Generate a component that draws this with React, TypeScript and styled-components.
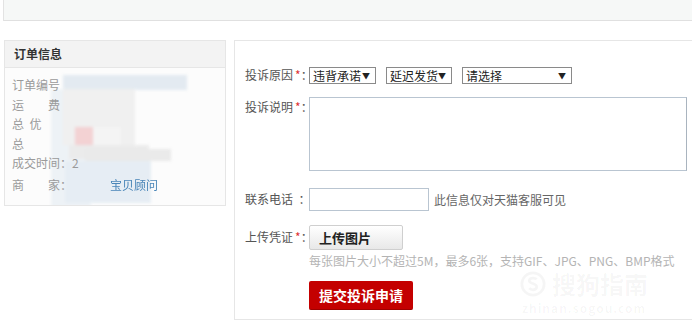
import styled, { createGlobalStyle } from "styled-components";

const GlobalStyle = createGlobalStyle`
    body {
        margin: 0;
        background: #fff;
        font-family: "Noto Sans CJK SC", "Noto Sans", sans-serif;
        font-size: 12px;
        color: #666;
        overflow: hidden;
    }
`

const Page = styled.div`
    width: 692px;
    height: 334px;
    overflow: hidden;
    position: relative;
`

const TopBar = styled.div`
    margin-left: 3px;
    height: 20px;
    background: #f6f8f7;
    border-left: 1px solid #e3e3e3;
    border-bottom: 1px solid #e0e0e0;
`

const Main = styled.div`
    display: flex;
    align-items: flex-start;
    gap: 8px;
    padding: 19px 0 0 4px;
`

const OrderPanel = styled.div`
    position: relative;
    width: 220px;
    height: 164px;
    border: 1px solid #e6e6e6;
    background: #fcfcfc;
    overflow: hidden;
`

const PanelTitle = styled.div`
    position: relative;
    z-index: 1;
    height: 26px;
    line-height: 26px;
    padding-left: 9px;
    background: #f3f3f3;
    border-bottom: 1px solid #e6e6e6;
    font-weight: bold;
    color: #333;
`

const InfoList = styled.div`
    position: relative;
    z-index: 1;
    padding: 7px 0 0 7px;
    color: #9a9a9a;
    line-height: 19.5px;
`

const InfoRow = styled.div<{ $gap?: number }>`
    margin-top: ${({ $gap }) => $gap ?? 0}px;
    white-space: pre;
`

const ShopLink = styled.span`
    margin-left: 38px;
    color: #4a86b8;
    filter: blur(0.4px);
`

const Mosaic = styled.div`
    position: absolute;
    inset: 0;
    z-index: 0;
    pointer-events: none;
    filter: blur(1.5px);
    opacity: 0.75;
`

const Tile = styled.div<{ $x: number; $y: number; $w: number; $h: number; $c: string }>`
    position: absolute;
    left: ${({ $x }) => $x}px;
    top: ${({ $y }) => $y}px;
    width: ${({ $w }) => $w}px;
    height: ${({ $h }) => $h}px;
    background: ${({ $c }) => $c};
`

const FormPanel = styled.div`
    flex: 1;
    margin-right: -4px;
    height: 280px;
    border: 1px solid #e6e6e6;
    padding: 26px 0 0 10px;
    box-sizing: border-box;
    position: relative;
`

const FormRow = styled.div<{ $top?: number }>`
    display: flex;
    align-items: flex-start;
    margin-top: ${({ $top }) => $top ?? 0}px;
`

const Label = styled.div<{ $pad?: number }>`
    width: 64px;
    flex-shrink: 0;
    padding-top: ${({ $pad }) => $pad ?? 0}px;
    line-height: 16px;
    color: #555;
    white-space: pre;
`

const Star = styled.span`
    color: #d33;
    margin-left: 2px;
`

const Controls = styled.div`
    display: flex;
    flex-direction: column;
    align-items: flex-start;
`

const SelectGroup = styled.div`
    display: flex;
    gap: 10px;
`

const FakeSelect = styled.div<{ $w: number }>`
    width: ${({ $w }) => $w}px;
    height: 17px;
    box-sizing: border-box;
    border: 1px solid #8a8a8a;
    background: #fff;
    color: #222;
    display: flex;
    align-items: center;
    justify-content: space-between;
    padding: 0 5px 0 3px;
    line-height: 15px;

    span.arrow {
        font-size: 8px;
        color: #222;
    }
`

const TextArea = styled.div`
    width: 378px;
    height: 74px;
    box-sizing: border-box;
    border: 1px solid #b9c5d1;
    border-right-color: #a9b4bf;
    background: #fff;
`

const PhoneLine = styled.div`
    display: flex;
    align-items: center;
    gap: 5px;
`

const PhoneInput = styled.div`
    width: 120px;
    height: 23px;
    box-sizing: border-box;
    border: 1px solid #b9c5d1;
    background: #fff;
`

const Hint = styled.span`
    color: #666;
`

const UploadButton = styled.div`
    width: 94px;
    height: 25px;
    box-sizing: border-box;
    border: 1px solid #cfcfcf;
    border-radius: 2px;
    background: linear-gradient(#ffffff, #e8e8e8);
    font-weight: bold;
    font-size: 13px;
    color: #222;
    line-height: 23px;
    padding-left: 9px;
`

const UploadTip = styled.div`
    margin-top: 2px;
    color: #b4b4b4;
    line-height: 18px;
`

const SubmitButton = styled.div`
    margin-top: 11px;
    width: 104px;
    height: 29px;
    box-sizing: border-box;
    border-radius: 2px;
    background: #c40000;
    border-bottom: 1px solid #9e0000;
    color: #fff;
    font-weight: bold;
    font-size: 14px;
    line-height: 28px;
    text-align: center;
`

const Watermark = styled.div`
    position: absolute;
    left: 285px;
    top: 229px;
    color: rgba(0, 0, 0, 0.04);
    display: flex;
    flex-direction: column;
    align-items: center;
    pointer-events: none;
`

const MarkTop = styled.div`
    display: flex;
    align-items: center;
    gap: 6px;
    font-size: 24px;
    line-height: 28px;
    font-weight: bold;
`

const MarkSub = styled.div`
    font-size: 12px;
    line-height: 14px;
    font-weight: bold;
    letter-spacing: 1px;
    margin-top: 3px;
`

const tiles = [
    { x: 58, y: 34, w: 124, h: 15, c: "#dbe5ee" },
    { x: 46, y: 48, w: 40, h: 120, c: "#e9eff4" },
    { x: 58, y: 48, w: 72, h: 56, c: "#ececec" },
    { x: 70, y: 86, w: 20, h: 20, c: "#f0c4c6" },
    { x: 88, y: 86, w: 28, h: 20, c: "#f2f2f2" },
    { x: 64, y: 104, w: 80, h: 14, c: "#e6e6e6" },
    { x: 80, y: 108, w: 86, h: 12, c: "#e4e4e4" },
    { x: 60, y: 120, w: 86, h: 42, c: "#dfe9f2" },
]

export default function App() {
    return (
        <Page>
            <GlobalStyle />
            <TopBar />
            <Main>
                <OrderPanel>
                    <PanelTitle>订单信息</PanelTitle>
                    <InfoList>
                        <InfoRow>订单编号</InfoRow>
                        <InfoRow>{"运　　费"}</InfoRow>
                        <InfoRow>{"总  优"}</InfoRow>
                        <InfoRow>总</InfoRow>
                        <InfoRow>成交时间：2</InfoRow>
                        <InfoRow $gap={2}>
                            {"商　　家："}
                            <ShopLink>宝贝顾问</ShopLink>
                        </InfoRow>
                    </InfoList>
                    <Mosaic>
                        {tiles.map((t, i) => (
                            <Tile key={i} $x={t.x} $y={t.y} $w={t.w} $h={t.h} $c={t.c} />
                        ))}
                    </Mosaic>
                </OrderPanel>

                <FormPanel>
                    <FormRow>
                        <Label $pad={0}>投诉原因<Star>*</Star>：</Label>
                        <SelectGroup>
                            <FakeSelect $w={67}>违背承诺<span className="arrow">▼</span></FakeSelect>
                            <FakeSelect $w={66}>延迟发货<span className="arrow">▼</span></FakeSelect>
                            <FakeSelect $w={110}>请选择<span className="arrow">▼</span></FakeSelect>
                        </SelectGroup>
                    </FormRow>

                    <FormRow $top={13}>
                        <Label $pad={2}>投诉说明<Star>*</Star>：</Label>
                        <TextArea />
                    </FormRow>

                    <FormRow $top={17}>
                        <Label $pad={3}>{"联系电话  ："}</Label>
                        <PhoneLine>
                            <PhoneInput />
                            <Hint>此信息仅对天猫客服可见</Hint>
                        </PhoneLine>
                    </FormRow>

                    <FormRow $top={14}>
                        <Label $pad={4}>上传凭证<Star>*</Star>：</Label>
                        <Controls>
                            <UploadButton>上传图片</UploadButton>
                            <UploadTip>每张图片大小不超过5M，最多6张，支持GIF、JPG、PNG、BMP格式</UploadTip>
                            <SubmitButton>提交投诉申请</SubmitButton>
                        </Controls>
                    </FormRow>

                    <Watermark>
                        <MarkTop>
                            <svg width="26" height="26" viewBox="0 0 28 28">
                                <circle cx="14" cy="14" r="12" fill="none" stroke="currentColor" strokeWidth="3" />
                                <path d="M18 9c-2-2-8-2-8 1.5S18 13 18 17s-6 4-8 1.5" fill="none" stroke="currentColor" strokeWidth="3" />
                            </svg>
                            搜狗指南
                        </MarkTop>
                        <MarkSub>zhinan.sogou.com</MarkSub>
                    </Watermark>
                </FormPanel>
            </Main>
        </Page>
    );
}
